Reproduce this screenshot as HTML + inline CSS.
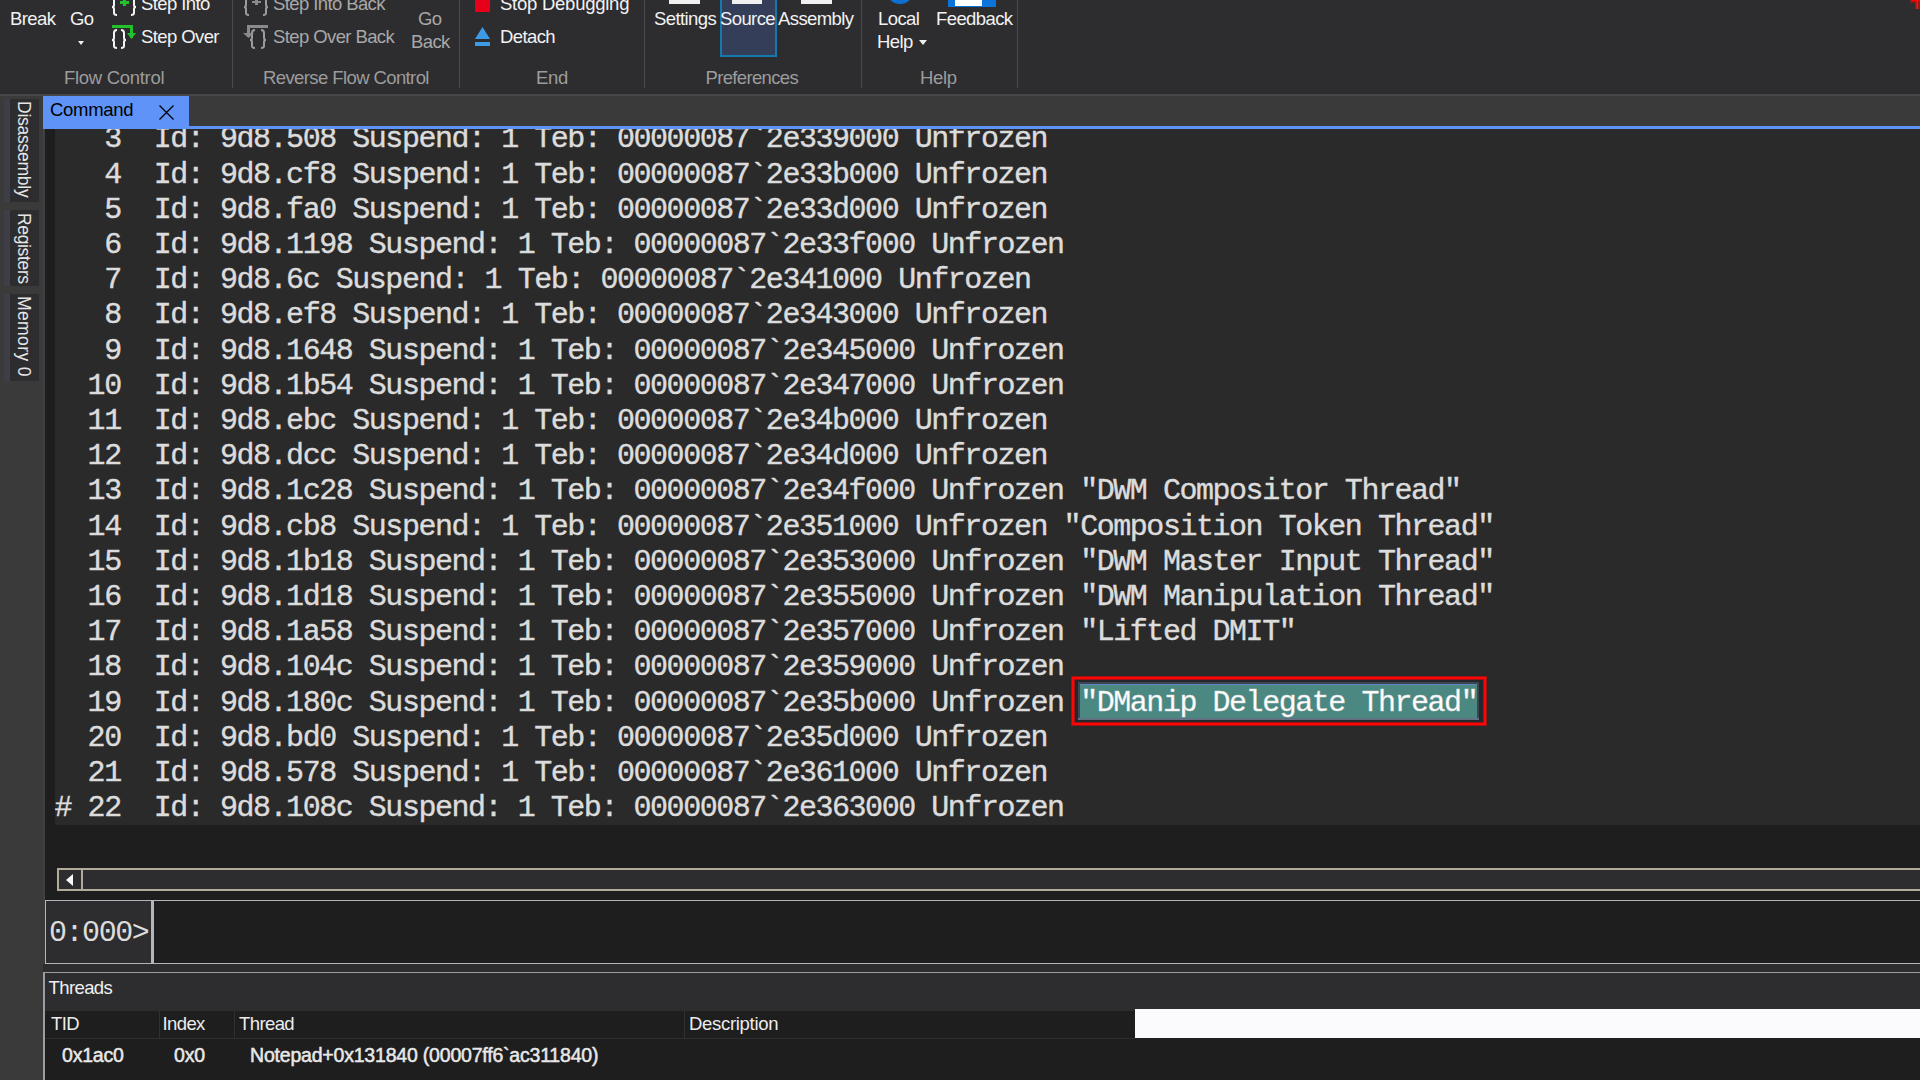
<!DOCTYPE html>
<html><head><meta charset="utf-8">
<style>
*{margin:0;padding:0;box-sizing:border-box}
html,body{width:1920px;height:1080px;overflow:hidden;background:#3a3a3a;font-family:"Liberation Sans",sans-serif}
.a{position:absolute}
.t{position:absolute;white-space:nowrap;font-size:18.5px;letter-spacing:-0.6px;line-height:22px;color:#f2f2f2}
.g{color:#9c9c9c;letter-spacing:-0.3px}
.b{font-weight:normal;color:#e8e8e8;font-size:19.5px;letter-spacing:-0.2px;-webkit-text-stroke:0.5px #e8e8e8}
.d{color:#a8a8a8}
.sep{position:absolute;top:0;width:1px;height:88px;background:#4a4a4d}
#mono div{position:absolute;left:54.5px;white-space:pre;font-family:"Liberation Mono",monospace;font-size:30px;letter-spacing:-1.46px;line-height:35.2px;height:35.2px;color:#dcdcdc;-webkit-text-stroke:0.4px #dcdcdc}
.vt{position:absolute;left:4px;width:35px;background:#2d2d30;border-left:6px solid #3d3e46}
.vt span{position:absolute;left:3px;top:3px;writing-mode:vertical-rl;font-size:17.5px;letter-spacing:-0.35px;line-height:22px;color:#e6e6e6;white-space:nowrap}
</style></head><body>
<!-- ribbon -->
<div class="a" style="left:0;top:0;width:1920px;height:93px;background:#2d2d30"></div>
<div class="a" style="left:0;top:93px;width:1920px;height:1px;background:#2a2a2c"></div>
<div class="a" style="left:0;top:94px;width:1920px;height:2px;background:#474747"></div>

<div class="t" style="left:10px;top:8px">Break</div>
<div class="t" style="left:70px;top:8px">Go</div>
<div class="a" style="left:78px;top:41px;width:0;height:0;border-left:3.5px solid transparent;border-right:3.5px solid transparent;border-top:4px solid #f0f0f0"></div>
<svg class="a" style="left:110px;top:0" width="30" height="52" viewBox="0 0 30 52">
 <g fill="none" stroke="#f4f4f4" stroke-width="2">
  <path d="M7 -4 Q4 -4 4 0 L4 5 Q4 7 2 7 Q4 7 4 9 L4 13 Q4 15 7 15"/>
  <path d="M21 -4 Q24 -4 24 0 L24 5 Q24 7 26 7 Q24 7 24 9 L24 13 Q24 15 21 15"/>
  <path d="M7 30 Q4 30 4 33 L4 38 Q4 40 2 40 Q4 40 4 42 L4 46 Q4 48 7 48"/>
  <path d="M11 30 Q14 30 14 33 L14 38 Q14 40 16 40 Q14 40 14 42 L14 46 Q14 48 11 48"/>
 </g>
 <g fill="#22c02a">
  <rect x="13" y="-2" width="3" height="8"/><rect x="10" y="1" width="9" height="3"/>
  <rect x="2" y="25" width="21" height="3"/><rect x="20" y="25" width="3" height="13"/>
  <path d="M17 33 L26 33 L21.5 39 Z"/>
 </g>
</svg>
<div class="t" style="left:141px;top:-7px">Step Into</div>
<div class="t" style="left:141px;top:26px">Step Over</div>
<div class="t g" style="left:64px;top:67px">Flow Control</div>
<div class="sep" style="left:232px"></div>

<svg class="a" style="left:242px;top:0" width="30" height="52" viewBox="0 0 30 52">
 <g fill="none" stroke="#9c9c9c" stroke-width="2">
  <path d="M7 -4 Q4 -4 4 0 L4 5 Q4 7 2 7 Q4 7 4 9 L4 13 Q4 15 7 15"/>
  <path d="M21 -4 Q24 -4 24 0 L24 5 Q24 7 26 7 Q24 7 24 9 L24 13 Q24 15 21 15"/>
  <path d="M13 30 Q10 30 10 33 L10 38 Q10 40 8 40 Q10 40 10 42 L10 46 Q10 48 13 48"/>
  <path d="M19 30 Q22 30 22 33 L22 38 Q22 40 24 40 Q22 40 22 42 L22 46 Q22 48 19 48"/>
 </g>
 <g fill="#8a8a8a">
  <rect x="13" y="-2" width="3" height="7"/><rect x="10" y="1" width="9" height="2"/>
  <rect x="5" y="25" width="21" height="3"/><rect x="5" y="25" width="3" height="12"/>
  <path d="M1 33 L12 33 L6.5 38 Z"/>
 </g>
</svg>
<div class="t d" style="left:273px;top:-7px">Step Into Back</div>
<div class="t d" style="left:273px;top:26px">Step Over Back</div>
<div class="t d" style="left:418px;top:7.5px">Go</div>
<div class="t d" style="left:411px;top:30.5px">Back</div>
<div class="t g" style="left:263px;top:67px;letter-spacing:-0.6px">Reverse Flow Control</div>
<div class="sep" style="left:459px"></div>

<div class="a" style="left:475px;top:0;width:15px;height:12px;background:#e8001a"></div>
<svg class="a" style="left:474px;top:26px" width="17" height="22" viewBox="0 0 17 22">
 <path d="M8.5 1 L16 13 L1 13 Z" fill="#3d9be6"/><rect x="1" y="16" width="15" height="4" fill="#3d9be6"/>
</svg>
<div class="t" style="left:500px;top:-7px;letter-spacing:-0.25px">Stop Debugging</div>
<div class="t" style="left:500px;top:26px">Detach</div>
<div class="t g" style="left:536px;top:67px">End</div>
<div class="sep" style="left:644px"></div>

<div class="a" style="left:669px;top:0;width:31px;height:4px;background:#f0f0f0"></div>
<div class="a" style="left:720px;top:0;width:57px;height:57px;background:#353e58;border:2px solid #1479ad;border-top:0"></div>
<div class="a" style="left:732px;top:0;width:30px;height:4px;background:#f0f0f0"></div>
<div class="a" style="left:801px;top:0;width:31px;height:4px;background:#f0f0f0"></div>
<div class="t" style="left:654px;top:8px">Settings</div>
<div class="t" style="left:720px;top:8px">Source</div>
<div class="t" style="left:778px;top:8px">Assembly</div>
<div class="t g" style="left:705.5px;top:67px;letter-spacing:-0.65px">Preferences</div>
<div class="sep" style="left:861px"></div>

<div class="a" style="left:886px;top:-24px;width:28px;height:28px;border-radius:50%;background:#0d6fcf"></div>
<div class="a" style="left:948px;top:0;width:48px;height:7px;background:#0a74da"></div>
<div class="a" style="left:955px;top:0;width:27px;height:6px;background:#ffffff"></div>
<div class="t" style="left:878px;top:8px">Local</div>
<div class="t" style="left:877px;top:31px">Help</div>
<div class="a" style="left:919px;top:40px;width:0;height:0;border-left:4px solid transparent;border-right:4px solid transparent;border-top:5px solid #f0f0f0"></div>
<div class="t" style="left:936px;top:8px">Feedback</div>
<div class="t g" style="left:920px;top:66.5px">Help</div>
<div class="sep" style="left:1017px"></div>
<svg class="a" style="left:1900px;top:0" width="20" height="12" viewBox="0 0 20 12">
 <path d="M9 1 L20 1 L20 3 L11 3 Z" fill="#8e1a1a"/><rect x="15" y="3" width="5" height="6" fill="#8e1a1a"/>
 <rect x="11" y="0" width="9" height="1.2" fill="#ff0000"/><rect x="16.5" y="0" width="1.6" height="9" fill="#ff1010"/>
</svg>

<!-- left sidebar tabs -->
<div class="vt" style="top:99px;height:103px"><span style="top:1.5px;letter-spacing:-0.25px">Disassembly</span></div>
<div class="vt" style="top:210px;height:76px"><span>Registers</span></div>
<div class="vt" style="top:294px;height:87px"><span style="top:2px;letter-spacing:0.4px">Memory 0</span></div>

<!-- command tab -->
<div class="a" style="left:43px;top:96px;width:146px;height:33px;background:#5f93f7"></div>
<div class="a" style="left:43px;top:126px;width:1877px;height:3px;background:#5f93f7"></div>
<div class="t" style="left:50px;top:99px;color:#000;letter-spacing:-0.3px">Command</div>
<svg class="a" style="left:158px;top:104px" width="17" height="17" viewBox="0 0 17 17">
 <path d="M1.5 1.5 L15.5 15.5 M15.5 1.5 L1.5 15.5" stroke="#000" stroke-width="1.25"/>
</svg>

<!-- command panel -->
<div class="a" style="left:43px;top:129px;width:2px;height:771px;background:#3f3f46"></div>
<div class="a" style="left:45px;top:129px;width:1875px;height:771px;background:#1e1e1e"></div>
<div class="a" style="left:55px;top:129px;width:1865px;height:696px;background:#2a2a2a"></div>

<!-- highlight -->
<div class="a" style="left:1071px;top:676px;width:416px;height:50px;border:1px solid #9c1515;box-shadow:inset 0 0 0 2px #ff0505,inset 0 0 0 3px #9c1515"></div>
<div class="a" style="left:1075px;top:680px;width:408px;height:42px;background:#24282c"></div>
<div class="a" style="left:1078px;top:682px;width:401px;height:38px;background:#3e4450;border-bottom:2px solid #627284"></div>
<div class="a" style="left:1080px;top:684px;width:397px;height:34px;background:#4a8881;border-top:1px solid #5a88c0"></div>

<div id="mono" class="a" style="left:0;top:129px;width:1920px;height:696px;overflow:hidden">
<div style="top:-6.6px">   3  Id: 9d8.508 Suspend: 1 Teb: 00000087`2e339000 Unfrozen</div>
<div style="top:28.6px">   4  Id: 9d8.cf8 Suspend: 1 Teb: 00000087`2e33b000 Unfrozen</div>
<div style="top:63.8px">   5  Id: 9d8.fa0 Suspend: 1 Teb: 00000087`2e33d000 Unfrozen</div>
<div style="top:99.0px">   6  Id: 9d8.1198 Suspend: 1 Teb: 00000087`2e33f000 Unfrozen</div>
<div style="top:134.2px">   7  Id: 9d8.6c Suspend: 1 Teb: 00000087`2e341000 Unfrozen</div>
<div style="top:169.4px">   8  Id: 9d8.ef8 Suspend: 1 Teb: 00000087`2e343000 Unfrozen</div>
<div style="top:204.6px">   9  Id: 9d8.1648 Suspend: 1 Teb: 00000087`2e345000 Unfrozen</div>
<div style="top:239.8px">  10  Id: 9d8.1b54 Suspend: 1 Teb: 00000087`2e347000 Unfrozen</div>
<div style="top:275.0px">  11  Id: 9d8.ebc Suspend: 1 Teb: 00000087`2e34b000 Unfrozen</div>
<div style="top:310.2px">  12  Id: 9d8.dcc Suspend: 1 Teb: 00000087`2e34d000 Unfrozen</div>
<div style="top:345.4px">  13  Id: 9d8.1c28 Suspend: 1 Teb: 00000087`2e34f000 Unfrozen "DWM Compositor Thread"</div>
<div style="top:380.6px">  14  Id: 9d8.cb8 Suspend: 1 Teb: 00000087`2e351000 Unfrozen "Composition Token Thread"</div>
<div style="top:415.8px">  15  Id: 9d8.1b18 Suspend: 1 Teb: 00000087`2e353000 Unfrozen "DWM Master Input Thread"</div>
<div style="top:451.0px">  16  Id: 9d8.1d18 Suspend: 1 Teb: 00000087`2e355000 Unfrozen "DWM Manipulation Thread"</div>
<div style="top:486.2px">  17  Id: 9d8.1a58 Suspend: 1 Teb: 00000087`2e357000 Unfrozen "Lifted DMIT"</div>
<div style="top:521.4px">  18  Id: 9d8.104c Suspend: 1 Teb: 00000087`2e359000 Unfrozen</div>
<div style="top:556.6px">  19  Id: 9d8.180c Suspend: 1 Teb: 00000087`2e35b000 Unfrozen <span style="color:#fff">"DManip Delegate Thread"</span></div>
<div style="top:591.8px">  20  Id: 9d8.bd0 Suspend: 1 Teb: 00000087`2e35d000 Unfrozen</div>
<div style="top:627.0px">  21  Id: 9d8.578 Suspend: 1 Teb: 00000087`2e361000 Unfrozen</div>
<div style="top:662.2px"># 22  Id: 9d8.108c Suspend: 1 Teb: 00000087`2e363000 Unfrozen</div>
</div>

<!-- scrollbar -->
<div class="a" style="left:57px;top:868px;width:1863px;height:23px;background:#2d2d30;border:2px solid #b3ab9a;border-right:0"></div>
<div class="a" style="left:81px;top:868px;width:2px;height:23px;background:#b3ab9a"></div>
<div class="a" style="left:65.5px;top:874px;width:0;height:0;border-top:6px solid transparent;border-bottom:6px solid transparent;border-right:7px solid #f8f8f8"></div>

<!-- input -->
<div class="a" style="left:45px;top:900px;width:1875px;height:64px;background:#1e1e1e;border:1px solid #b4b4bc;border-right:0"></div>
<div class="a" style="left:46px;top:901px;width:105px;height:62px;background:#2d2d30"></div>
<div class="a" style="left:151px;top:901px;width:3px;height:62px;background:#b4b4bc"></div>
<div class="a" style="left:49px;top:916px;white-space:pre;font-family:'Liberation Mono',monospace;font-size:30px;letter-spacing:-1.46px;line-height:35.2px;color:#dcdcdc">0:000&gt;</div>

<!-- threads panel -->
<div class="a" style="left:43px;top:964px;width:1877px;height:8px;background:#2d2d30"></div>
<div class="a" style="left:43px;top:972px;width:1877px;height:108px;background:#1e1e1e;border-top:1px solid #9c9ca2;border-left:2px solid #9c9ca2"></div>
<div class="a" style="left:45px;top:973px;width:1875px;height:38px;background:#2d2d30"></div>
<div class="t" style="left:48.5px;top:977px;color:#f0f0f0">Threads</div>
<div class="a" style="left:1135px;top:1009px;width:785px;height:29px;background:#fbfbfd"></div>
<div class="a" style="left:45px;top:1038px;width:1090px;height:1px;background:#2e2e30"></div>
<div class="a" style="left:159px;top:1011px;width:1px;height:27px;background:#303032"></div>
<div class="a" style="left:234px;top:1011px;width:1px;height:27px;background:#303032"></div>
<div class="a" style="left:684px;top:1011px;width:1px;height:27px;background:#303032"></div>
<div class="t" style="left:51px;top:1012.5px;color:#ececec">TID</div>
<div class="t" style="left:162.5px;top:1012.5px;color:#ececec">Index</div>
<div class="t" style="left:239px;top:1012.5px;color:#ececec">Thread</div>
<div class="t" style="left:689px;top:1013px;color:#ececec;letter-spacing:-0.3px">Description</div>
<div class="t b" style="left:62px;top:1044px">0x1ac0</div>
<div class="t b" style="left:174px;top:1044px">0x0</div>
<div class="t b" style="left:250px;top:1044px">Notepad+0x131840 (00007ff6`ac311840)</div>
</body></html>
